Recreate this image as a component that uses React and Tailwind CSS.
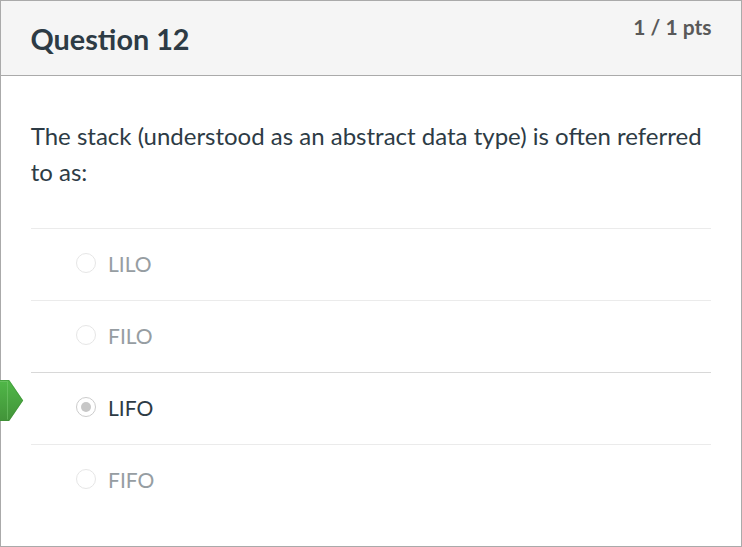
const answers = [
  { text: 'LILO', selected: false },
  { text: 'FILO', selected: false },
  { text: 'LIFO', selected: true },
  { text: 'FIFO', selected: false },
];

function CorrectArrow() {
  return (
    <svg className="absolute -left-[31px] top-[7px]" width="24" height="42" viewBox="0 0 24 42">
      <defs>
        <linearGradient id="arrowFill" x1="0" y1="0" x2="0" y2="1">
          <stop offset="0" stopColor="#50b848" />
          <stop offset="1" stopColor="#429339" />
        </linearGradient>
      </defs>
      <path d="M0 0H9.2L23.2 20.5L9.2 41H0Z" fill="url(#arrowFill)" />
      <path d="M0 .5H9L22.5 20.5L9 40.5H0" fill="none" stroke="#3b8b35" strokeOpacity=".45" />
      <path d="M0 1.5H7.5V39.5" fill="none" stroke="#7bcb73" strokeOpacity=".5" />
    </svg>
  );
}

function Answer({ text, selected }) {
  return (
    <div className={`relative flex h-[72px] items-start border-t pl-[45px] pt-[24px] ${selected ? 'border-[#d8d8d8]' : 'border-[#ebebeb]'}`}>
      {selected && <CorrectArrow />}
      <span className={`flex size-5 shrink-0 items-center justify-center rounded-full border ${selected ? 'border-[#cccccc]' : 'border-[#e6e6e6]'}`}>
        {selected && <span className="size-[10px] rounded-full bg-[#c7c7c7]" />}
      </span>
      <span className={`ml-3 mt-[-4px] text-[21px] leading-[30px] ${selected ? 'text-[#2d3b45]' : 'text-[#969da2]'}`}>{text}</span>
    </div>
  );
}

export default function App() {
  return (
    <div className="flex h-[547px] w-[742px] flex-col border border-[#aaaaaa] bg-white font-[Lato,sans-serif] text-[#2d3b45]">
      <header className="flex h-[75px] shrink-0 items-start justify-between border-b border-[#aaaaaa] bg-[#f5f5f5] pl-[29.5px] pr-[29.5px]">
        <h2 className="mt-[20px] text-[28.8px] font-bold leading-[36px]">Question 12</h2>
        <span className="mt-[11px] text-[21px] font-bold leading-[30px] text-[#595959]">1 / 1 pts</span>
      </header>
      <main className="px-[30px] pt-[42px]">
        <p className="-ml-[0.25px] -mr-4 text-[24px] leading-[36px]">
          The stack (understood as an abstract data type) is often referred
          <br />
          to as:
        </p>
        <div className="mt-[38px] w-[680px]">
          {answers.map((answer) => (
            <Answer key={answer.text} {...answer} />
          ))}
        </div>
      </main>
    </div>
  );
}
